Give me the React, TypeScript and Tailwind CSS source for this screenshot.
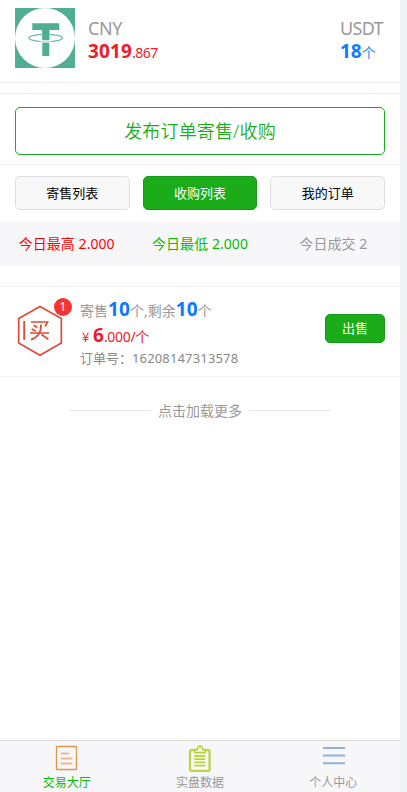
import type { ReactNode } from 'react';

function TetherLogo() {
  return (
    <svg className="block size-[60px] shrink-0" viewBox="0 0 60 60">
      <rect width="60" height="60" fill="#50ae94" />
      <circle cx="30" cy="30" r="30" fill="#fff" />
      <path d="M17.3 15.3H44.3V22H34.3V48H27.3V22H17.3Z" fill="#50ae94" />
      <ellipse cx="30.7" cy="30" rx="16.8" ry="3.6" fill="none" stroke="#fff" strokeWidth="2.4" />
      <ellipse cx="30.7" cy="30" rx="16.8" ry="3.6" fill="none" stroke="#6dbba5" strokeWidth="1.3" />
      <path d="M27.3 22h7v10h-7z" fill="#50ae94" />
      <path d="M24 32.8Q30.5 33.6 37 32.8" fill="none" stroke="#fff" strokeWidth="1.1" />
    </svg>
  );
}

function BuyHexagon() {
  return (
    <svg className="block h-[52px] w-[46px]" viewBox="0 0 46 52" fill="none" stroke="#e04a3a">
      <path d="M23 1.5 44.3 13.5V38L23 50.2 1.7 38V13.5Z" strokeWidth="1.7" />
      <path d="M7.2 16V34.8" strokeWidth="1.9" />
      <path
        d="M14 17H30.5L28.2 21.5M16.7 20.3 20.3 22.5M14.8 24 18.6 26.2M13 28H32M24 19.5C24.3 28 20.5 32.5 14 34.6M24.5 29.5 31.3 34.3"
        strokeWidth="1.7"
      />
    </svg>
  );
}

function DocumentIcon() {
  return (
    <svg className="block h-[26px] w-[24px]" viewBox="0 0 24 26" fill="none" stroke="#df9650">
      <rect x="1.5" y="1.5" width="20" height="23" rx="0.6" strokeWidth="1.3" />
      <path d="M6.5 8.5H13.5M6.5 13.5H16.5M6.5 18.5H16.5" strokeWidth="2" stroke="#ecbb94" strokeLinecap="round" />
    </svg>
  );
}

function ClipboardIcon() {
  return (
    <svg className="block h-[28px] w-[24px]" viewBox="0 0 24 28" fill="none" stroke="#bcd440">
      <rect x="2" y="5.2" width="19.6" height="20.6" rx="1" strokeWidth="2.2" />
      <path d="M6.8 7.6V4.7H9.2Q9.7 1.2 12 1.2T14.8 4.7H17.2V7.6Z" strokeWidth="1.8" fill="#f7f7fa" />
      <path d="M6.3 11H17.3M6.3 14.2H17.3M6.3 17.4H17.3M6.3 20.6H17.3" strokeWidth="1.8" />
    </svg>
  );
}

function MenuIcon() {
  return (
    <svg className="ml-px mt-px block h-[20px] w-[22px]" viewBox="0 0 22 20" stroke="#94aee0" strokeWidth="2">
      <path d="M0 2H22M0 9.6H22M0 17.3H22" />
    </svg>
  );
}

function ListTab({ children, active = false }: { children: ReactNode; active?: boolean }) {
  return (
    <button
      className={
        active
          ? 'h-[34px] flex-1 rounded-[5px] border border-[#189718] bg-[#1aad19] pb-px text-[13px] leading-[18px] text-white'
          : 'h-[34px] flex-1 rounded-[5px] border border-[#dedede] bg-[#f8f8f8] pb-px text-[13px] leading-[18px] text-black'
      }
    >
      {children}
    </button>
  );
}

function NavItem({ icon, label, active = false }: { icon: ReactNode; label: string; active?: boolean }) {
  return (
    <a className="flex flex-1 flex-col items-center">
      <span className="flex h-[33px] items-start justify-center pt-[4px]">{icon}</span>
      <span className={active ? 'text-[12px] leading-[18px] text-[#09bb07]' : 'text-[12px] leading-[18px] text-[#999]'}>
        {label}
      </span>
    </a>
  );
}

export default function App() {
  return (
    <div className="h-[792px] w-[407px] overflow-hidden bg-[#f1f2f4] font-['Noto_Sans','Noto_Sans_CJK_SC',sans-serif] font-normal">
      <div className="flex h-full w-[400px] flex-col bg-white">
        <header className="flex h-[83px] border-b border-[#f2f2f2] px-[15px] pt-[8px]">
          <TetherLogo />
          <div className="ml-[13px] mt-[8px] flex-1">
            <div className="h-[23px] text-[18px] leading-[24px] tracking-[-0.4px] text-[#999]">CNY</div>
            <div className="h-[24px] whitespace-nowrap leading-[24px] text-[#ee1b2b]">
              <span className="text-[19px] font-bold tracking-[0.1px]">3019</span>
              <span className="text-[14px] tracking-[-0.5px]">.867</span>
            </div>
          </div>
          <div className="mt-[8px] w-[45px]">
            <div className="h-[23px] text-[18px] leading-[24px] tracking-[-0.7px] text-[#999]">USDT</div>
            <div className="h-[24px] whitespace-nowrap leading-[24px] text-[#0d7aff]">
              <span className="text-[19px] font-bold">18</span>
              <span className="text-[14px] font-[350]">个</span>
            </div>
          </div>
        </header>

        <section className="mt-[10px] h-[72px] border-y border-[#efefef] px-[15px] pt-[13px]">
          <button className="block h-[48px] w-full rounded-[5px] border border-[#1aad19] text-[18px] font-[350] leading-[46px] tracking-[0.15px] text-[#1aad19]">
            发布订单寄售/收购
          </button>
        </section>

        <nav className="flex gap-[13px] px-[15px] pt-[11px]">
          <ListTab>寄售列表</ListTab>
          <ListTab active>收购列表</ListTab>
          <ListTab>我的订单</ListTab>
        </nav>

        <section className="mt-[11px] flex h-[45px] items-center whitespace-nowrap bg-[#f7f7fa] text-center text-[14px] tracking-[0.05px]">
          <span className="flex-1 text-[#ff0000]">今日最高 2.000</span>
          <span className="flex-1 text-[#09bb07]">今日最低 2.000</span>
          <span className="flex-1 text-[#999]">今日成交 2</span>
        </section>

        <article className="mt-[20px] flex h-[91px] border-y border-[#f2f2f2] pl-[17px] pr-[15px]">
          <div className="relative mt-[18px] w-[63px] shrink-0">
            <BuyHexagon />
            <span className="absolute left-[37px] top-[-7px] flex h-[18px] w-[18px] items-center justify-center rounded-full bg-[#f43530] text-[12px] leading-none text-white">
              1
            </span>
          </div>
          <div className="mt-[10px] flex-1 whitespace-nowrap text-[14px] text-[#999]">
            <div className="h-[26px] leading-[24px]">
              寄售<span className="text-[19px] font-bold tracking-[0.1px] text-[#0d7aff]">10</span>个,剩余
              <span className="text-[19px] font-bold tracking-[0.1px] text-[#0d7aff]">10</span>个
            </div>
            <div className="h-[26px] leading-[24px] text-[#ee1b2b]">
              <span className="inline-block w-[13px] pl-[2px] font-['Noto_Sans_CJK_SC',sans-serif] text-[13px]">¥</span>
              <span className="text-[19px] font-bold">6</span>
              <span className="tracking-[-0.3px]">.000/个</span>
            </div>
            <div className="text-[13px] leading-[18px] text-[#888]">
              订单号：<span className="tracking-[0.15px]">16208147313578</span>
            </div>
          </div>
          <button className="mt-[27px] h-[29px] w-[60px] rounded-[5px] border border-[#189718] bg-[#1aad19] text-[13px] leading-[27px] text-white">
            出售
          </button>
        </article>

        <div className="mx-[70px] mt-[23px] flex h-[21px] items-center gap-[7px] text-[14px] leading-[21px] text-[#999]">
          <span className="h-px flex-1 bg-[#e5e5e5]" />
          <span>点击加载更多</span>
          <span className="h-px flex-1 bg-[#e5e5e5]" />
        </div>

        <footer className="mt-auto flex h-[52px] border-t border-[#dcdcdc] bg-[#f7f7fa]">
          <NavItem active label="交易大厅" icon={<DocumentIcon />} />
          <NavItem label="实盘数据" icon={<ClipboardIcon />} />
          <NavItem label="个人中心" icon={<MenuIcon />} />
        </footer>
      </div>
    </div>
  );
}
